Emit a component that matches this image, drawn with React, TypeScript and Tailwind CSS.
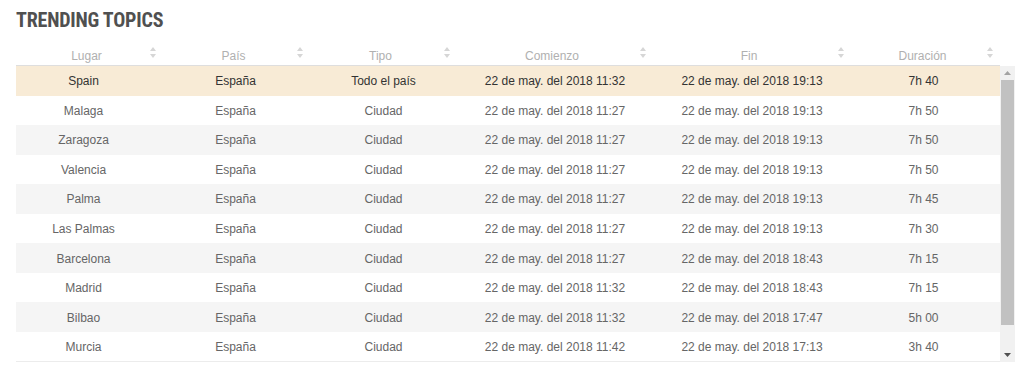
const rows = [
  { lugar: "Spain", pais: "España", tipo: "Todo el país", inicio: "22 de may. del 2018 11:32", fin: "22 de may. del 2018 19:13", dur: "7h 40" },
  { lugar: "Malaga", pais: "España", tipo: "Ciudad", inicio: "22 de may. del 2018 11:27", fin: "22 de may. del 2018 19:13", dur: "7h 50" },
  { lugar: "Zaragoza", pais: "España", tipo: "Ciudad", inicio: "22 de may. del 2018 11:27", fin: "22 de may. del 2018 19:13", dur: "7h 50" },
  { lugar: "Valencia", pais: "España", tipo: "Ciudad", inicio: "22 de may. del 2018 11:27", fin: "22 de may. del 2018 19:13", dur: "7h 50" },
  { lugar: "Palma", pais: "España", tipo: "Ciudad", inicio: "22 de may. del 2018 11:27", fin: "22 de may. del 2018 19:13", dur: "7h 45" },
  { lugar: "Las Palmas", pais: "España", tipo: "Ciudad", inicio: "22 de may. del 2018 11:27", fin: "22 de may. del 2018 19:13", dur: "7h 30" },
  { lugar: "Barcelona", pais: "España", tipo: "Ciudad", inicio: "22 de may. del 2018 11:27", fin: "22 de may. del 2018 18:43", dur: "7h 15" },
  { lugar: "Madrid", pais: "España", tipo: "Ciudad", inicio: "22 de may. del 2018 11:32", fin: "22 de may. del 2018 18:43", dur: "7h 15" },
  { lugar: "Bilbao", pais: "España", tipo: "Ciudad", inicio: "22 de may. del 2018 11:32", fin: "22 de may. del 2018 17:47", dur: "5h 00" },
  { lugar: "Murcia", pais: "España", tipo: "Ciudad", inicio: "22 de may. del 2018 11:42", fin: "22 de may. del 2018 17:13", dur: "3h 40" },
];

const headers = ["Lugar", "País", "Tipo", "Comienzo", "Fin", "Duración"];

const cols = "grid grid-cols-[147px_147px_147px_196px_198px_149px]";

const SortIcon = () => (
  <svg width="6" height="11" viewBox="0 0 6 11" className="absolute right-[7px] top-[2px]">
    <path d="M3 0 L6 4 L0 4 Z" fill="#d6d6d6" />
    <path d="M3 11 L6 7 L0 7 Z" fill="#d6d6d6" />
  </svg>
);

const App = () => {
  return (
    <div className="w-[1024px] h-[377px] bg-white px-4 pt-[9px] font-['Liberation_Sans',Arial,sans-serif] overflow-hidden">
      <h1 className="text-[20px] leading-[22px] font-bold text-[#505050] tracking-[-0.2px] font-['Liberation_Sans_Narrow','Roboto_Condensed','Liberation_Sans',sans-serif]">
        TRENDING TOPICS
      </h1>

      <div className="w-[999px] mt-[14px]">
        <div className={`${cols} w-[984px] h-[21px] border-b border-[#dedede] text-[12px] text-[#b0b0b0]`}>
          {headers.map((h) => (
            <div key={h} className="relative flex items-start justify-center pr-[6px] pt-[2px] leading-[18px]">
              {h}
              <SortIcon />
            </div>
          ))}
        </div>

        <div className="flex">
          <div className="w-[984px] border-b border-[#ececec]">
            {rows.map((r, i) => (
              <div
                key={r.lugar}
                className={`${cols} h-[29.55px] items-center pt-[1px] text-[12px] ${
                  i === 0 ? "bg-[#f8ebd6] text-[#333333]" : i % 2 === 0 ? "bg-[#f5f5f5] text-[#666666]" : "bg-white text-[#666666]"
                }`}
              >
                <div className="text-center pr-[12px]">{r.lugar}</div>
                <div className="text-center pr-[2px]">{r.pais}</div>
                <div className="text-center">{r.tipo}</div>
                <div className="text-center">{r.inicio}</div>
                <div className="text-center">{r.fin}</div>
                <div className="text-center pr-[4px]">{r.dur}</div>
              </div>
            ))}
          </div>

          <div className="w-[15px] h-[296px] bg-[#f1f1f1] flex flex-col items-center">
            <div className="h-[14px] flex items-center justify-center">
              <svg width="7" height="4" viewBox="0 0 7 4">
                <path d="M3.5 0 L7 4 L0 4 Z" fill="#a3a3a3" />
              </svg>
            </div>
            <div className="w-[13px] h-[245px] bg-[#c1c1c1]" />
            <div className="flex-1" />
            <div className="h-[14px] flex items-center justify-center">
              <svg width="7" height="4" viewBox="0 0 7 4">
                <path d="M0 0 L7 0 L3.5 4 Z" fill="#505050" />
              </svg>
            </div>
          </div>
        </div>
      </div>
    </div>
  );
};

export default App;
